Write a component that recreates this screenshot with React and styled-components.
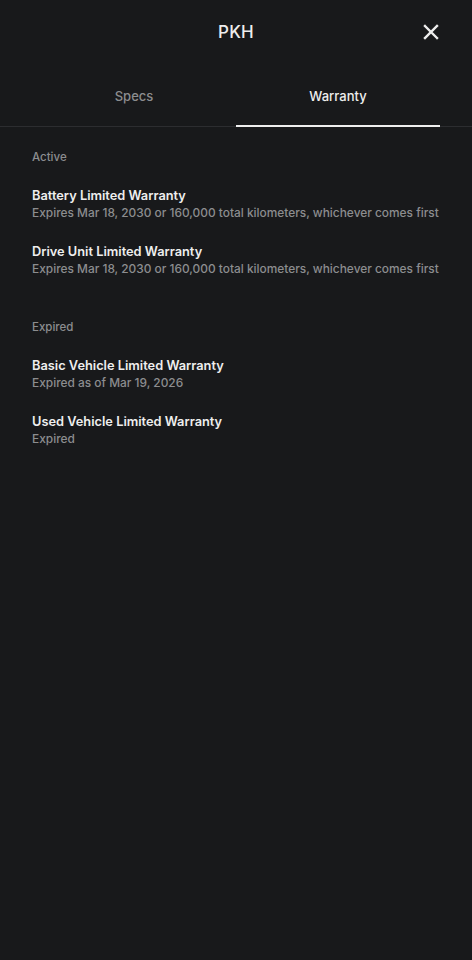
import React from "react";
import styled, { createGlobalStyle } from "styled-components";

const GlobalStyle = createGlobalStyle`
  html, body {
    margin: 0;
    padding: 0;
    background: #18191b;
  }
  body {
    font-family: Inter, "Noto Sans", sans-serif;
    -webkit-font-smoothing: antialiased;
  }
`;

const colors = {
  bg: "#18191b",
  text: "#eeeeee",
  muted: "#8c8d8f",
  divider: "#2c2d30",
};

const Page = styled.div`
  min-height: 960px;
  background: ${colors.bg};
  color: ${colors.text};
`;

const Header = styled.header`
  height: 64px;
  display: grid;
  grid-template-columns: 1fr auto 1fr;
  align-items: center;
  padding: 0 32px;
`;

const Title = styled.h1`
  grid-column: 2;
  margin: 0;
  font-size: 17px;
  font-weight: 500;
  letter-spacing: 0.2px;
`;

const CloseButton = styled.button`
  grid-column: 3;
  justify-self: end;
  width: 24px;
  height: 24px;
  padding: 0;
  margin-right: -3px;
  border: none;
  background: transparent;
  color: ${colors.text};
  display: flex;
  align-items: center;
  justify-content: center;
  cursor: pointer;
`;

const TabBar = styled.nav`
  display: flex;
  padding: 0 32px;
  margin-top: 10px;
  border-bottom: 1px solid ${colors.divider};
`;

const Tab = styled.button`
  flex: 1;
  height: 53px;
  border: none;
  background: transparent;
  font-family: inherit;
  font-size: 13px;
  font-weight: 500;
  color: ${(p) => (p.$active ? colors.text : colors.muted)};
  border-bottom: 2px solid ${(p) => (p.$active ? colors.text : "transparent")};
  margin-bottom: -1px;
  padding: 0 0 8px;
  cursor: pointer;
`;

const Content = styled.main`
  padding: 23px 32px;
`;

const Section = styled.section`
  margin-bottom: 43px;
`;

const SectionLabel = styled.h2`
  margin: 0 0 23px;
  font-size: 11.5px;
  font-weight: 500;
  color: ${colors.muted};
`;

const List = styled.ul`
  list-style: none;
  margin: 0;
  padding: 0;
  display: flex;
  flex-direction: column;
  gap: 22px;
`;

const Item = styled.li`
  display: flex;
  flex-direction: column;
`;

const ItemName = styled.span`
  font-size: 12.8px;
  font-weight: 600;
  color: ${colors.text};
  line-height: 18px;
`;

const ItemDetail = styled.span`
  font-size: 11.9px;
  font-weight: 500;
  color: ${colors.muted};
  line-height: 16px;
  white-space: nowrap;
`;

const sections = [
  {
    label: "Active",
    items: [
      {
        name: "Battery Limited Warranty",
        detail:
          "Expires Mar 18, 2030 or 160,000 total kilometers, whichever comes first",
      },
      {
        name: "Drive Unit Limited Warranty",
        detail:
          "Expires Mar 18, 2030 or 160,000 total kilometers, whichever comes first",
      },
    ],
  },
  {
    label: "Expired",
    items: [
      { name: "Basic Vehicle Limited Warranty", detail: "Expired as of Mar 19, 2026" },
      { name: "Used Vehicle Limited Warranty", detail: "Expired" },
    ],
  },
];

const App = () => {
  return (
    <Page>
      <GlobalStyle />
      <Header>
        <Title>PKH</Title>
        <CloseButton aria-label="Close">
          <svg width="16" height="16" viewBox="0 0 16 16">
            <path
              d="M2 2 L14 14 M14 2 L2 14"
              stroke="currentColor"
              strokeWidth="2.4"
              strokeLinecap="square"
            />
          </svg>
        </CloseButton>
      </Header>
      <TabBar>
        <Tab>Specs</Tab>
        <Tab $active>Warranty</Tab>
      </TabBar>
      <Content>
        {sections.map((section) => (
          <Section key={section.label}>
            <SectionLabel>{section.label}</SectionLabel>
            <List>
              {section.items.map((item) => (
                <Item key={item.name}>
                  <ItemName>{item.name}</ItemName>
                  <ItemDetail>{item.detail}</ItemDetail>
                </Item>
              ))}
            </List>
          </Section>
        ))}
      </Content>
    </Page>
  );
};

export default App;
